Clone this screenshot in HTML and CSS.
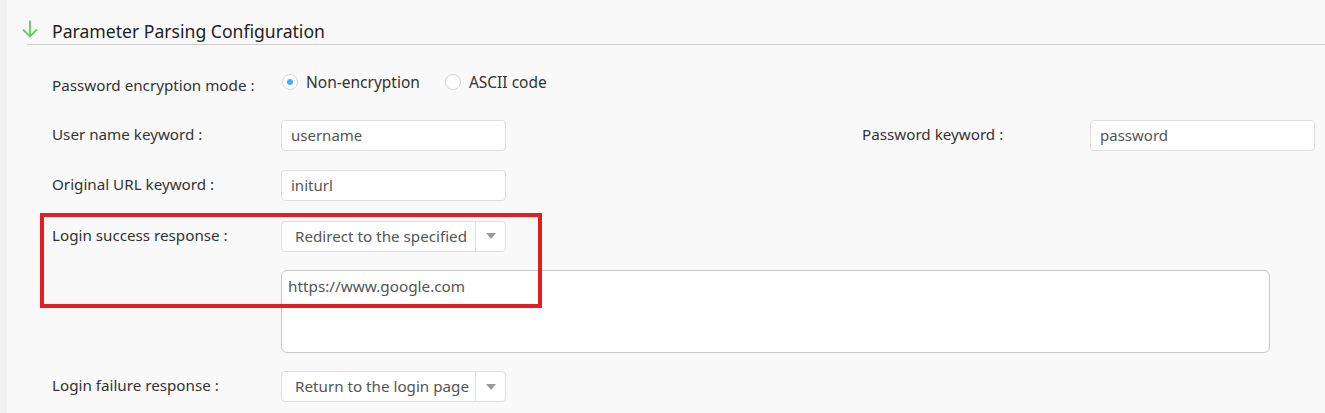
FILE: index.html
```html
<!DOCTYPE html>
<html>
<head>
<meta charset="utf-8">
<link rel="stylesheet" href="styles.css">
</head>
<body>
<div class="page">
  <div class="strip"></div>
  <div class="main">
    <div class="section-head">
      <svg class="arrow" width="18" height="20" viewBox="0 0 18 20"><path d="M9 1.5 V17 M2 10.5 L9 17.5 L16 10.5" fill="none" stroke="#5fcf5f" stroke-width="1.8"/></svg>
      <span class="title">Parameter Parsing Configuration</span>
    </div>
    <div class="form">
      <div class="row row-radio">
        <div class="label label-low">Password encryption mode :</div>
        <div class="radios">
          <label class="radio"><span class="dot checked"></span>Non-encryption</label>
          <label class="radio"><span class="dot"></span>ASCII code</label>
        </div>
      </div>
      <div class="row row-1">
        <div class="label">User name keyword :</div>
        <div class="input">username</div>
        <div class="label label-right">Password keyword :</div>
        <div class="input">password</div>
      </div>
      <div class="row row-2">
        <div class="label">Original URL keyword :</div>
        <div class="input">initurl</div>
      </div>
      <div class="row row-3">
        <div class="label">Login success response :</div>
        <div class="select"><span class="sel-text">Redirect to the specified</span><span class="sel-btn"><span class="tri"></span></span></div>
      </div>
      <div class="row row-4">
        <div class="label"></div>
        <div class="textarea">https://www.google.com</div>
      </div>
      <div class="row row-5">
        <div class="label">Login failure response :</div>
        <div class="select"><span class="sel-text">Return to the login page</span><span class="sel-btn"><span class="tri"></span></span></div>
      </div>
      <div class="highlight"></div>
    </div>
  </div>
</div>
</body>
</html>
```

FILE: styles.css
```css
* { box-sizing: border-box; }
html, body { margin: 0; padding: 0; }
body {
  background: #f9f9f9;
  font-family: "Noto Sans", "Open Sans", sans-serif;
  color: #333;
  width: 1325px;
  height: 413px;
  overflow: hidden;
}
.page { display: flex; height: 413px; }
.strip { width: 7px; background: #f1f1f1; flex: none; }
.main { flex: 1; }
.section-head {
  margin-left: 20px;
  margin-top: 17px;
  height: 28px;
  border-bottom: 1px solid #cdcdcd;
  display: flex;
  align-items: flex-start;
  position: relative;
}
.arrow { margin-left: -6px; margin-top: 2px; flex: none; }
.title {
  margin-left: 13px;
  font-size: 17.6px;
  line-height: 28px;
  color: #222;
}
.form { position: relative; padding-left: 45px; padding-top: 22px; }
.row { display: flex; align-items: center; }
.label {
  width: 229px;
  flex: none;
  font-size: 15.2px;
  color: #333;
  white-space: nowrap;
  padding-bottom: 3px;
}
.label-low { padding-top: 4px; padding-bottom: 0; }
.label-right { margin-left: 356px; width: 228px; }
.row-radio { height: 31px; }
.radios { display: flex; gap: 24px; padding-bottom: 2px; }
.radio { display: flex; align-items: center; font-size: 15.5px; color: #333; }
.dot {
  width: 16px; height: 16px; border-radius: 50%;
  border: 1px solid #d6d6d6; background: #fff;
  margin-right: 8px; position: relative; margin-left: 1px;
}
.dot.checked::after {
  content: ""; position: absolute; left: 4px; top: 4px;
  width: 6px; height: 6px; border-radius: 50%; background: #3db3f2;
}
.row-1 { margin-top: 22px; height: 31px; }
.row-2 { margin-top: 19px; height: 31px; }
.row-3 { margin-top: 20px; height: 30px; }
.row-4 { margin-top: 19px; align-items: flex-start; }
.row-5 { margin-top: 18px; height: 31px; }
.input {
  width: 225px; height: 31px; flex: none;
  background: #fff; border: 1px solid #dedede; border-radius: 4px;
  font-size: 15px; color: #555; padding: 0 9px 2px;
  display: flex; align-items: center;
}
.select {
  width: 225px; height: 31px; flex: none;
  background: #fff; border: 1px solid #dedede; border-radius: 4px;
  display: flex; align-items: center; overflow: hidden;
}
.sel-text {
  width: 193px; flex: none; padding-left: 13px; padding-bottom: 1px;
  font-size: 15.2px; color: #555; white-space: nowrap; overflow: hidden;
}
.sel-btn {
  flex: 1; height: 100%; border-left: 1px solid #e2e2e2;
  display: flex; align-items: center; justify-content: center;
}
.tri {
  width: 0; height: 0;
  border-left: 5px solid transparent; border-right: 5px solid transparent;
  border-top: 6px solid #9a9a9a;
}
.textarea {
  width: 989px; height: 83px; flex: none;
  background: #fff; border: 1px solid #c6c6c6; border-radius: 6px;
  font-size: 15.3px; color: #555; padding: 5px 6px;
}
.highlight {
  position: absolute;
  left: 33px; top: 168px;
  width: 502px; height: 95px;
  border: 4px solid #e21e23;
  pointer-events: none;
}
```
